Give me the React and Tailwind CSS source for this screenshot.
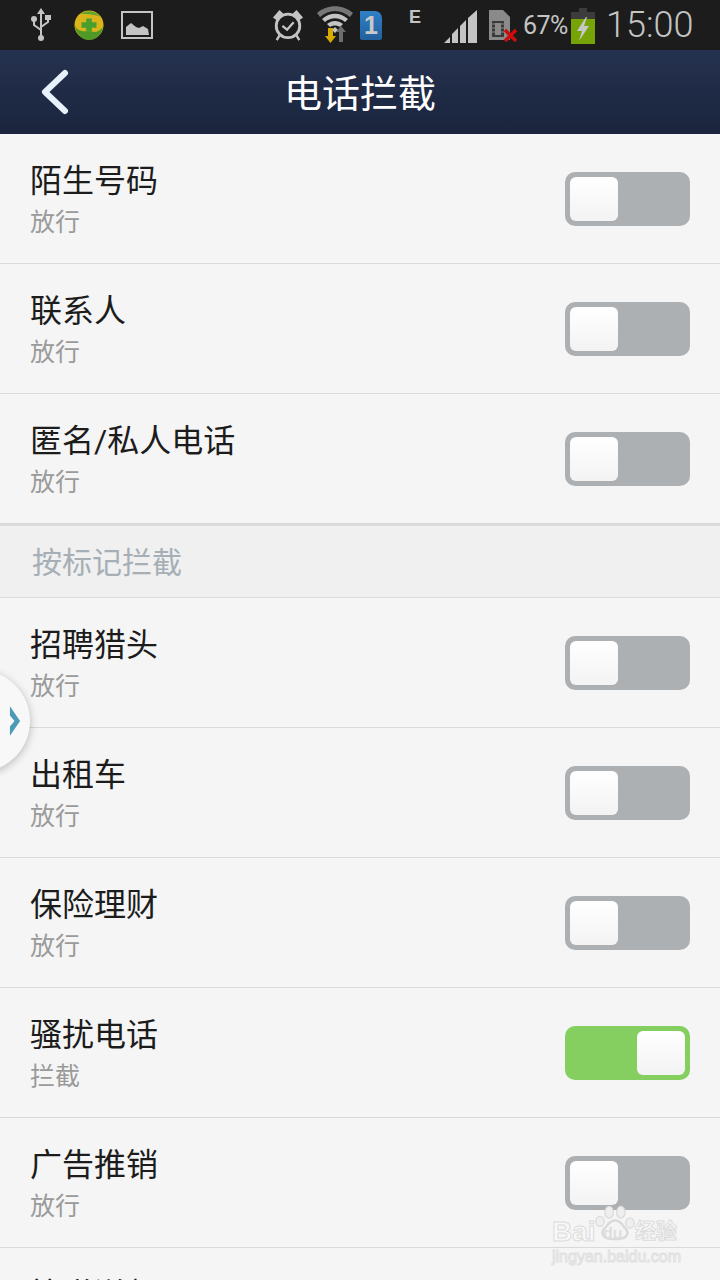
const cjk = '"Roboto", "Noto Sans CJK SC", sans-serif';

function Toggle({ on }) {
  return (
    <div className={`flex h-[54px] w-[125px] rounded-[10px] p-[5px] ${on ? "justify-end bg-[#84cf60]" : "justify-start bg-[#acb0b2]"}`}>
      <div className="h-[44px] w-[48px] rounded-[6px] bg-gradient-to-b from-white to-[#f3f3f3]" />
    </div>
  );
}

function Row({ title, sub, on }) {
  return (
    <div className="flex h-[130px] items-center justify-between border-b border-[#d9d9d9] px-[30px]">
      <div className="flex flex-col pt-[6px]">
        <div className="text-[32px] leading-[40px] text-[#1c1c1c]">{title}</div>
        <div className="mt-[3px] text-[25px] leading-[38px] text-[#9a9a9a]">{sub}</div>
      </div>
      <Toggle on={on} />
    </div>
  );
}

function StatusBar() {
  return (
    <div className="flex h-[50px] items-center bg-[#1c1c1c]">
      {/* usb */}
      <svg className="ml-[30px] h-[34px] w-[22px]" viewBox="0 0 22 34" fill="none" stroke="#c4c4c4" strokeWidth="2">
        <path d="M11 4v26M11 22l-7-5v-5M11 19l7-5v-4" />
        <path d="M11 0l4 6H7z" fill="#c4c4c4" stroke="none" />
        <circle cx="4" cy="11" r="3" fill="#c4c4c4" stroke="none" />
        <rect x="15" y="7" width="6" height="5" fill="#c4c4c4" stroke="none" />
        <circle cx="11" cy="30" r="3" fill="#c4c4c4" stroke="none" />
      </svg>
      {/* 360 */}
      <svg className="ml-[22px] h-[32px] w-[30px]" viewBox="0 0 32 32">
        <circle cx="16" cy="16" r="15.500" fill="#d9b41a" />
        <path d="M1 17c5 8 12 5 18 6 4 1 8 0 12-5-1 8-8 14-15 14C8 32 2 25 1 17z" fill="#4f9a26" />
        <path d="M7 4c6-4 15-4 21 3-6-2-13-3-21-3z" fill="#5da52f" />
        <path d="M13 9h6v4h5v6h-5v4h-6v-4H8v-6h5z" fill="#4a9e2c" />
      </svg>
      {/* picture */}
      <svg className="ml-[17px] h-[28px] w-[32px]" viewBox="0 0 32 28">
        <rect x="1" y="1" width="30" height="26" fill="none" stroke="#c4c4c4" strokeWidth="2" />
        <path d="M5 24v-8l5-4 5 4 3 1 4-2 5 3 1 6z" fill="#c4c4c4" />
      </svg>
      {/* alarm */}
      <svg className="ml-[119px] h-[34px] w-[32px]" viewBox="0 0 34 34" fill="none" stroke="#c4c4c4">
        <circle cx="17" cy="18" r="12.500" strokeWidth="3" />
        <path d="M11 18l5 4 7-8" strokeWidth="2.500" />
        <path d="M1 9l7-8 4 4-7 7zM33 9l-7-8-4 4 7 7z" fill="#c4c4c4" stroke="none" />
        <path d="M8 28l-3 5M26 28l3 5" strokeWidth="2.500" />
      </svg>
      {/* wifi */}
      <svg className="ml-[13px] h-[38px] w-[36px]" viewBox="0 0 36 38">
        <path d="M0 7c10-9 26-9 36 0l-3 4C24 3 12 3 3 11z" fill="#767676" />
        <path d="M5 13c8-7 18-7 26 0l-3 3c-6-5-14-5-20 0z" fill="#c4c4c4" />
        <path d="M10 18c5-4 11-4 16 0l-3 3c-3-2-7-2-10 0z" fill="#c4c4c4" />
        <path d="M15 24l3-3 3 3-3 3z" fill="#c4c4c4" />
        <path d="M11 22h5v8h3l-5.500 7L8 30h3z" fill="#d9a900" />
        <path d="M22 36v-10h-3l5-6 5 6h-3v10z" fill="#6d6d6d" />
      </svg>
      {/* sim 1 */}
      <div className="ml-[7px] flex h-[29px] w-[22px] items-center justify-center rounded-tr-[7px] rounded-b-[2px] bg-gradient-to-b from-[#2f80c8] to-[#22609c] text-[25px] font-bold leading-none text-[#c8c8c8]" style={{ fontFamily: '"Liberation Sans", sans-serif' }}>1</div>
      <div className="mb-[17px] ml-[27px] w-[10px] text-[18px] font-bold leading-none text-[#c4c4c4]" style={{ fontFamily: '"Liberation Sans", sans-serif' }}>E</div>
      {/* signal */}
      <svg className="ml-[25px] mt-[3px] h-[33px] w-[33px]" viewBox="0 0 33 33" fill="#c4c4c4">
        <path d="M0 33l6-6v6zM8 33V24l6-6v15zM16 33V16l6-6v23zM24 33V8l9-8v33z" />
      </svg>
      {/* no sim */}
      <svg className="ml-[12px] mt-[2px] h-[32px] w-[28px]" viewBox="0 0 28 32">
        <path d="M0 0h14l7 7v23H0z" fill="#8a8a8a" />
        <rect x="3" y="11" width="12" height="16" fill="#3a3a3a" />
        <rect x="6" y="13" width="6" height="12" fill="#8a8a8a" />
        <path d="M3 14h12M3 18h12M3 22h12" stroke="#8a8a8a" />
        <path d="M16 20l11 11M27 20L16 31" stroke="#cc0d0d" strokeWidth="3.500" />
      </svg>
      <div className="ml-[6px] w-[44px] text-[25px] leading-none tracking-[-0.5px] text-[#c4c4c4]" style={{ fontFamily: '"Roboto", sans-serif' }}>67%</div>
      {/* battery */}
      <svg className="ml-[4px] mt-[1px] h-[36px] w-[24px]" viewBox="0 0 24 36">
        <rect x="8" y="0" width="8" height="4" fill="#3c3c3c" />
        <rect x="0" y="4" width="24" height="32" fill="#76a306" />
        <rect x="0" y="4" width="24" height="7" fill="#3c3c3c" />
        <path d="M15 9L6 23h5l-3 10 10-15h-5l3-9z" fill="#c8c8c8" />
      </svg>
      <div className="ml-[11px] text-[36px] leading-none text-[#c4c4c4]" style={{ fontFamily: '"Roboto", sans-serif', fontWeight: 300 }}>15:00</div>
    </div>
  );
}

function Watermark() {
  return (
    <div className="absolute left-[552px] top-[1201px] h-[68px] w-[130px]">
      <svg className="absolute left-[43px] top-[1px] h-[42px] w-[40px]" viewBox="0 0 48 44" fill="#efefef" stroke="#dadada" strokeWidth="1.500">
        <ellipse cx="17" cy="9" rx="5" ry="7" />
        <ellipse cx="31" cy="9" rx="5" ry="7" />
        <ellipse cx="6" cy="20" rx="5" ry="6" />
        <ellipse cx="42" cy="22" rx="5" ry="6" />
        <path d="M24 19c7 0 9 6 13 10 5 6 0 13-13 12-13 1-18-6-13-12 4-4 6-10 13-10z" fill="#f5f5f5" strokeWidth="3" />
      </svg>
      <div className="absolute left-0 top-[17px] text-[28px] font-bold leading-none text-[#f8f8f8] [-webkit-text-stroke:1px_#dcdcdc]" style={{ fontFamily: '"Liberation Sans", sans-serif' }}>Bai</div>
      <div className="absolute left-[51px] top-[25px] text-[16px] font-bold leading-none text-[#dedede]" style={{ fontFamily: '"Liberation Sans", sans-serif' }}>du</div>
      <div className="absolute left-[83px] top-[20px] text-[21px] font-bold leading-none text-[#f8f8f8] [-webkit-text-stroke:1px_#dcdcdc]">经验</div>
      <div className="absolute left-0 top-[48px] text-[16px] leading-none text-[#f8f8f8] [-webkit-text-stroke:1px_#e0e0e0]" style={{ fontFamily: '"Liberation Sans", sans-serif' }}>jingyan.baidu.com</div>
    </div>
  );
}

export default function App() {
  return (
    <div className="relative h-[1280px] w-[720px] overflow-hidden bg-[#f5f5f5]" style={{ fontFamily: cjk }}>
      <StatusBar />
      <div className="relative flex h-[84px] items-center justify-center bg-gradient-to-b from-[#25324f] to-[#1a243d] pt-[3px]">
        <svg className="absolute left-[38px] top-[18px] h-[48px] w-[34px]" viewBox="0 0 34 48" fill="none" stroke="#e6f1fb" strokeWidth="6" strokeLinecap="round" strokeLinejoin="round">
          <path d="M27 5L7 24l20 19" />
        </svg>
        <div className="text-[38px] leading-none text-white">电话拦截</div>
      </div>

      <Row title="陌生号码" sub="放行" />
      <Row title="联系人" sub="放行" />
      <Row title="匿名/私人电话" sub="放行" />

      <div className="flex h-[74px] items-center border-y border-[#dcdcdc] bg-[#f0f0f0] pl-[32px] pt-[2px] text-[30px] leading-none text-[#a6afb5] [border-top-width:2px]">
        按标记拦截
      </div>

      <Row title="招聘猎头" sub="放行" />
      <Row title="出租车" sub="放行" />
      <Row title="保险理财" sub="放行" />
      <Row title="骚扰电话" sub="拦截" on />
      <Row title="广告推销" sub="放行" />
      <Row title="快递送餐" sub="放行" />

      {/* floating tab */}
      <div className="absolute left-[-72px] top-[670px] flex h-[102px] w-[102px] items-center justify-end rounded-full bg-[#f8f8f8] pr-[9px] shadow-[0_2px_8px_rgba(0,0,0,0.25)]">
        <svg className="h-[32px] w-[12px]" viewBox="0 0 13 32">
          <path d="M1 0l11 16L1 32V22l5-6-5-6z" fill="#4a9ab8" />
        </svg>
      </div>
      <Watermark />
    </div>
  );
}
